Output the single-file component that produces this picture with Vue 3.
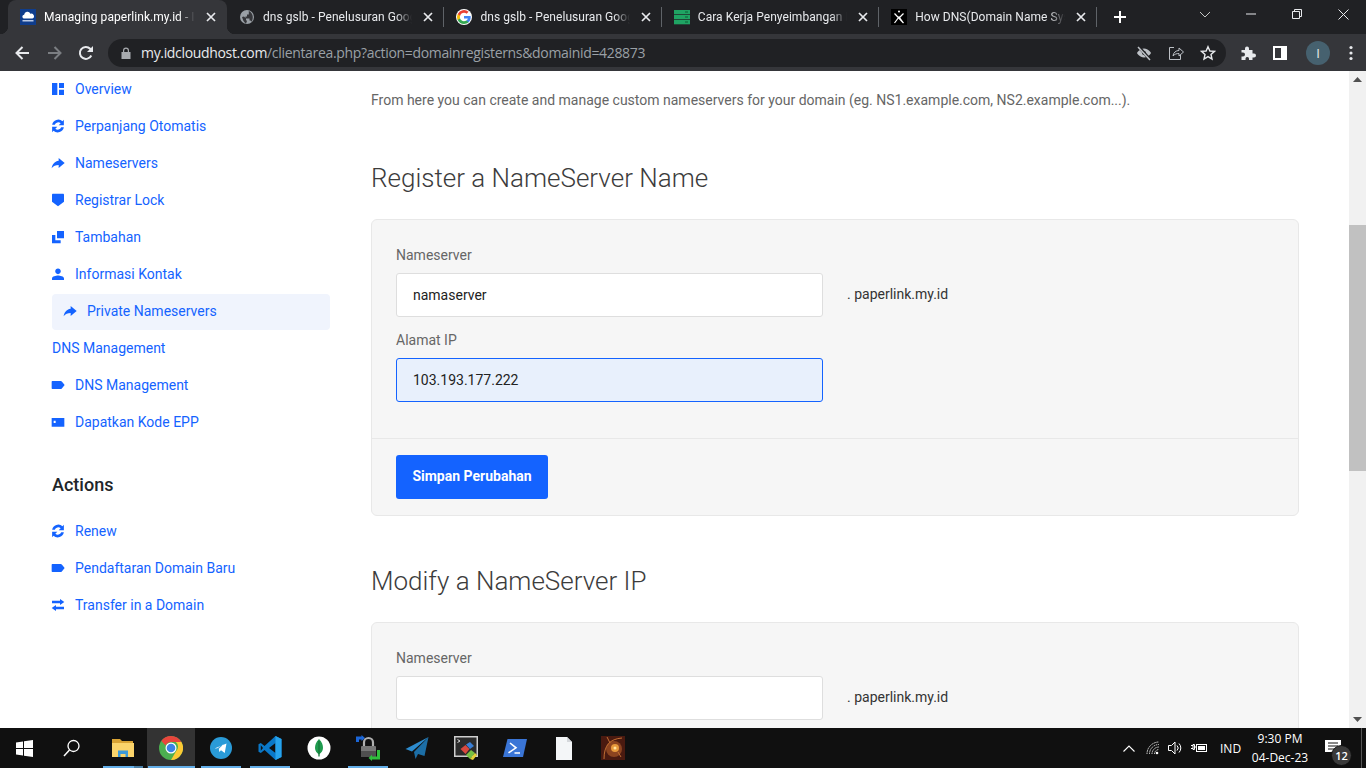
<script setup>
const P = {
  dash: 'M3 3h8v18H3zM13.500 3H21v7.500h-7.500zM13.500 13H21v8h-7.500z',
  sync: 'M20.800 2.800v8H13l3-3A5.600 5.600 0 0 0 7.200 10H3.200A9.400 9.400 0 0 1 18.800 5zM3.200 21.200v-8H11l-3 3A5.600 5.600 0 0 0 16.800 14h4A9.400 9.400 0 0 1 5.200 19z',
  fwd: 'M13 4.500L22 12l-9 7.500v-4.500C8.500 15 5 16.500 2.500 20c.6-5.500 4-10.500 10.500-11.500z',
  shield: 'M4 2.800h16a1 1 0 0 1 1 1v10.700l-9 7-9-7V3.800a1 1 0 0 1 1-1z',
  lib: 'M10.500 3H21v11H10.500zM3 9h5v8h8v4.500H3z',
  person: 'M12 12.200c2.300 0 4.200-1.900 4.200-4.200S14.300 3.800 12 3.800 7.800 5.700 7.800 8s1.900 4.200 4.200 4.200zM12 14.400c-2.900 0-9 1.400-9 4.300v2.200h18v-2.200c0-2.900-6.100-4.300-9-4.300z',
  label: 'M3.500 6H16c.7 0 1.300.3 1.700.8L22 12l-4.300 5.200c-.4.500-1 .8-1.700.8H3.500a1 1 0 0 1-1-1V7a1 1 0 0 1 1-1z',
  card: 'M2.500 6h19v13h-19zM5.500 10v3.500h3V10z',
  swap: 'M15 3l6.500 4.500L15 12V9.500H3v-4h12zM9 12v2.500h12v4H9V21l-6.500-4.500z'
}
const nav = [
  { icon: 'dash', text: 'Overview' },
  { icon: 'sync', text: 'Perpanjang Otomatis' },
  { icon: 'fwd', text: 'Nameservers' },
  { icon: 'shield', text: 'Registrar Lock' },
  { icon: 'lib', text: 'Tambahan' },
  { icon: 'person', text: 'Informasi Kontak' },
  { icon: 'fwd', text: 'Private Nameservers', active: true },
  { text: 'DNS Management' },
  { icon: 'label', text: 'DNS Management' },
  { icon: 'card', text: 'Dapatkan Kode EPP' }
]
const actions = [
  { icon: 'sync', text: 'Renew' },
  { icon: 'label', text: 'Pendaftaran Domain Baru' },
  { icon: 'swap', text: 'Transfer in a Domain' }
]
const tabs = [
  { fav: 'cloud', title: 'Managing paperlink.my.id - IDCloudHost', active: true },
  { fav: 'globe', title: 'dns gslb - Penelusuran Google' },
  { fav: 'google', title: 'dns gslb - Penelusuran Google' },
  { fav: 'server', title: 'Cara Kerja Penyeimbangan Beban' },
  { fav: 'x', title: 'How DNS(Domain Name System) Works' }
]
const apps = ['explorer', 'chrome', 'telegram', 'vscode', 'mongo', 'lock', 'send', 'remote', 'ps', 'file', 'game']
const running = ['explorer', 'chrome', 'telegram', 'vscode', 'lock']
</script>

<template>
  <div class="screen">
    <header class="strip">
      <div v-for="t in tabs" :key="t.fav" class="tab" :class="{ active: t.active }">
        <svg class="fav" viewBox="0 0 16 16">
          <template v-if="t.fav === 'cloud'">
            <rect width="16" height="16" fill="#0f3d8c" />
            <path d="M3.500 9.500a2 2 0 0 1 .6-3.800 3.300 3.300 0 0 1 6.300-.9 2.400 2.400 0 0 1 2 4.700z" fill="#fff" />
            <rect x="2.500" y="11" width="11" height="1.500" fill="#b9c9e6" />
          </template>
          <template v-else-if="t.fav === 'globe'">
            <circle cx="8" cy="8" r="7" fill="#9aa0a6" />
            <path d="M7 14.800C4.500 13 3.800 10.500 3 8l2-.5 2 2v1.500l1 1zM12.500 12.800c-.3-1-1-1.300-2-1.300V9.500H6.500V7.500H8V5.500h1.800V2c2 .6 4 3.200 4 6 0 1.700-.4 3.500-1.300 4.800z" fill="#35363a" />
          </template>
          <template v-else-if="t.fav === 'google'">
            <circle cx="8" cy="8" r="8" fill="#fff" />
            <path d="M14.700 8.200c0-.5 0-.9-.1-1.300H8v2.500h3.800a3.200 3.200 0 0 1-1.400 2.100v1.700h2.300c1.300-1.200 2-3 2-5z" fill="#4285f4" />
            <path d="M8 15c1.900 0 3.400-.6 4.600-1.700l-2.300-1.800c-.6.400-1.400.7-2.400.7-1.800 0-3.400-1.200-3.900-2.900H1.700v1.800A7 7 0 0 0 8 15z" fill="#34a853" />
            <path d="M4.100 9.300a4.200 4.200 0 0 1 0-2.700V4.900H1.700a7 7 0 0 0 0 6.200z" fill="#fbbc05" />
            <path d="M8 3.800c1 0 1.900.4 2.600 1l2-2A7 7 0 0 0 1.700 4.900l2.400 1.800C4.600 5 6.200 3.800 8 3.800z" fill="#ea4335" />
          </template>
          <template v-else-if="t.fav === 'server'">
            <rect x="0" y="1" width="16" height="4.300" fill="#1fa463" />
            <rect x="0" y="6" width="16" height="4.300" fill="#1fa463" />
            <rect x="0" y="11" width="16" height="4.300" fill="#1fa463" />
            <rect x="11" y="2.500" width="3" height="1" fill="#0b5e36" />
            <rect x="11" y="7.500" width="3" height="1" fill="#0b5e36" />
            <rect x="11" y="12.500" width="3" height="1" fill="#0b5e36" />
          </template>
          <template v-else>
            <rect width="16" height="16" fill="#000" />
            <circle cx="8" cy="2.500" r="1" fill="#fff" />
            <path d="M3.500 14 8 8 12.500 14M3.500 4.500 12.500 14M12.500 4.500 8 9" stroke="#fff" stroke-width="1.200" fill="none" />
          </template>
        </svg>
        <span class="tab-title">{{ t.title }}</span>
        <svg class="tab-x" viewBox="0 0 10 10"><path d="M1 1l8 8M9 1l-8 8" stroke="#e8eaed" stroke-width="1.700" /></svg>
      </div>
      <svg class="newtab" viewBox="0 0 12 12"><path d="M6 0v12M0 6h12" stroke="#fff" stroke-width="2" /></svg>
      <div class="strip-fill"></div>
      <div class="winbtn">
        <svg width="12" height="7" viewBox="0 0 12 7"><path d="M1 1l5 5 5-5" stroke="#c4c7c5" fill="none" /></svg>
      </div>
      <div class="winbtn">
        <svg width="10" height="10" viewBox="0 0 10 10"><path d="M0 5h10" stroke="#e8eaed" /></svg>
      </div>
      <div class="winbtn">
        <svg width="10" height="10" viewBox="0 0 10 10"><path d="M.5 2.500h7v7h-7zM2.500 2.500v-2h7v7h-2" stroke="#e8eaed" fill="none" /></svg>
      </div>
      <div class="winbtn">
        <svg width="11" height="11" viewBox="0 0 11 11"><path d="M.5.500l10 10M10.500.500l-10 10" stroke="#e8eaed" /></svg>
      </div>
    </header>

    <div class="toolbar">
      <svg class="tb back" viewBox="0 0 16 16"><path d="M15 8H2.500M8.500 2l-6 6 6 6" stroke="#e8eaed" stroke-width="2" fill="none" /></svg>
      <svg class="tb fwd" viewBox="0 0 16 16"><path d="M1 8h12.500M7.500 2l6 6-6 6" stroke="#7b7e82" stroke-width="2" fill="none" /></svg>
      <svg class="tb reload" viewBox="0 0 16 16"><path d="M13.300 10.500A6 6 0 1 1 12.200 3.700L14 5.500" stroke="#e8eaed" stroke-width="2" fill="none" /><path d="M15 1v6H9z" fill="#e8eaed" /></svg>
      <div class="omni">
        <svg class="padlock" viewBox="0 0 10 12"><path d="M2 5V3.500a3 3 0 0 1 6 0V5h1.500v7H.5V5zM3.200 5h3.600V3.500a1.800 1.800 0 0 0-3.600 0z" fill="#a8abaf" /></svg>
        <span class="url"><b>my.idcloudhost.com</b>/clientarea.php?action=domainregisterns&amp;domainid=428873</span>
        <div class="omni-icons">
          <svg viewBox="0 0 16 16"><path d="M1 8s2.500-4.500 7-4.500S15 8 15 8s-2.500 4.500-7 4.500S1 8 1 8z" fill="#bdc1c6" /><circle cx="8" cy="8" r="2" fill="#202124" /><path d="M2.500 1.500l11.500 13" stroke="#202124" stroke-width="3" /><path d="M2 2l12 13" stroke="#bdc1c6" stroke-width="1.500" /></svg>
          <svg viewBox="0 0 16 16"><path d="M6 2.500H1.500v12h11V10" stroke="#bdc1c6" fill="none" /><path d="M5 11c.3-3.500 3-5.500 6-5.500V3l4.500 4L11 11V8.500C8.500 8.500 6.500 9.200 5 11z" stroke="#bdc1c6" fill="none" /></svg>
          <svg viewBox="0 0 16 16"><path d="M8 1.700l1.900 4.300 4.600.4-3.500 3 1 4.600L8 11.600 4 14l1-4.600-3.500-3 4.600-.4z" stroke="#e8eaed" stroke-width="1.400" fill="none" /></svg>
        </div>
      </div>
      <svg class="tb puzzle" viewBox="0 0 16 16"><path d="M1.500 5H5V3.500a2 2 0 0 1 4 0V5h3.500v3.500H14a2 2 0 0 1 0 4h-1.500V15H9v-1.500a1.800 1.800 0 0 0-3.500 0V15h-4v-3.500H3a2 2 0 0 0 0-4H1.500z" fill="#e8eaed" /></svg>
      <svg class="tb side" viewBox="0 0 14 14"><path d="M0 0h14v14H0zM2 2v10h6V2z" fill="#fff" fill-rule="evenodd" /></svg>
      <div class="avatar">I</div>
      <svg class="tb kebab" viewBox="0 0 4 16"><circle cx="2" cy="2.500" r="1.600" fill="#e8eaed" /><circle cx="2" cy="8" r="1.600" fill="#e8eaed" /><circle cx="2" cy="13.500" r="1.600" fill="#e8eaed" /></svg>
    </div>

    <div class="page">
      <aside class="sidebar">
        <a v-for="(n, i) in nav" :key="i" class="item" :class="{ active: n.active, plain: !n.icon }">
          <svg v-if="n.icon" class="ico" viewBox="0 0 24 24"><path :d="P[n.icon]" fill-rule="evenodd" /></svg>
          <span>{{ n.text }}</span>
        </a>
        <h3 class="side-h">Actions</h3>
        <a v-for="n in actions" :key="n.text" class="item">
          <svg class="ico" viewBox="0 0 24 24"><path :d="P[n.icon]" fill-rule="evenodd" /></svg>
          <span>{{ n.text }}</span>
        </a>
      </aside>

      <main class="main">
        <p class="desc">From here you can create and manage custom nameservers for your domain (eg. NS1.example.com, NS2.example.com...).</p>

        <h2 class="title first">Register a NameServer Name</h2>
        <section class="card">
          <div class="card-body">
            <label class="lbl">Nameserver</label>
            <div class="row">
              <input class="inp" readonly value="namaserver" />
              <span class="suffix">. paperlink.my.id</span>
            </div>
            <label class="lbl">Alamat IP</label>
            <div class="row">
              <input class="inp focus" readonly value="103.193.177.222" />
            </div>
          </div>
          <div class="card-foot">
            <button class="btn">Simpan Perubahan</button>
          </div>
        </section>

        <h2 class="title">Modify a NameServer IP</h2>
        <section class="card">
          <div class="card-body">
            <label class="lbl">Nameserver</label>
            <div class="row">
              <input class="inp" readonly value="" />
              <span class="suffix">. paperlink.my.id</span>
            </div>
          </div>
        </section>
      </main>

      <div class="scrollbar">
        <svg class="arrow" viewBox="0 0 9 5"><path d="M4.500 0L9 5H0z" fill="#505050" /></svg>
        <div class="track"><div class="thumb"></div></div>
        <svg class="arrow" viewBox="0 0 9 5"><path d="M4.500 5L9 0H0z" fill="#505050" /></svg>
      </div>
    </div>

    <footer class="taskbar">
      <div class="tk">
        <svg width="17" height="17" viewBox="0 0 17 17"><path d="M0 2.400 7 1.400V8H0zM8 1.300 17 0V8H8zM0 9h7v6.600L0 14.600zM8 9h9v8l-9-1.300z" fill="#fff" /></svg>
      </div>
      <div class="tk">
        <svg width="18" height="18" viewBox="0 0 18 18"><circle cx="10.500" cy="7" r="5.500" stroke="#fff" stroke-width="1.300" fill="none" /><path d="M6.500 11L1 17" stroke="#fff" stroke-width="1.500" /></svg>
      </div>
      <div v-for="a in apps" :key="a" class="tk app" :class="{ on: a === 'chrome', run: running.includes(a), stacked: a === 'explorer' }">
        <svg width="24" height="26" viewBox="0 0 24 26">
          <template v-if="a === 'explorer'">
            <path d="M1 4h8l2 2h11v16H1z" fill="#d9a334" />
            <path d="M1 8h22v14H1z" fill="#fbd46b" />
            <path d="M7 22v-6.500h10V22h-2.500v-3h-5v3z" fill="#3d9ad8" />
          </template>
          <template v-else-if="a === 'chrome'">
            <circle cx="12" cy="13" r="12" fill="#4caf50" />
            <path d="M12 1a12 12 0 0 1 10.400 6H12a6 6 0 0 0-5.400 3.500L2.300 6A12 12 0 0 1 12 1z" fill="#e8453c" />
            <path d="M22.400 7A12 12 0 0 1 12 25l5.200-9a6 6 0 0 0-.4-9z" fill="#fcc934" />
            <circle cx="12" cy="13" r="5.500" fill="#fff" />
            <circle cx="12" cy="13" r="4.300" fill="#3b82e6" />
          </template>
          <template v-else-if="a === 'telegram'">
            <circle cx="12" cy="13" r="11" fill="#2a9bd8" />
            <path d="M5.500 13.500 17.500 8.500l-1.800 9.500-3.700-2.800-1.700 1.800-.5-3.300 5-4.700-6.500 4.200z" fill="#fff" />
          </template>
          <template v-else-if="a === 'vscode'">
            <path d="M17.500 1 6.500 11 2.800 8 .5 9.200v7.600L2.800 18l3.700-3 11 10 6-3V4zM17.500 8v10L11 13z" fill="#0a78c8" fill-rule="evenodd" />
            <path d="M17.500 1l6 3v18l-6 3zM17.500 8v10l-.1-.1V8.100z" fill="#27a3ec" />
            <path d="M2.800 10.300 5 13l-2.200 2.700z" fill="#101010" />
          </template>
          <template v-else-if="a === 'mongo'">
            <circle cx="12" cy="13" r="11.500" fill="#fff" />
            <path d="M12 4c3 3 4 6 4 9 0 3-2 5-3.400 6l-.3 3h-.6l-.3-3C10 18 8 16 8 13c0-3 1-6 4-9z" fill="#1f9b4f" />
            <path d="M12 6v15" stroke="#0d5a2a" stroke-width=".7" />
          </template>
          <template v-else-if="a === 'lock'">
            <path d="M0 7V1.500h5.500V0L9 3 5.500 6V4.500H3V7z" fill="#1b66d8" />
            <path d="M8 11V7.500a4.500 4.500 0 0 1 9 0V11" stroke="#b0b0b0" stroke-width="2.200" fill="none" />
            <rect x="5" y="11" width="15" height="11" rx="1" fill="#777" />
            <rect x="5" y="16" width="15" height="6" fill="#4f4f4f" />
            <path d="M21 15h3v9.500h-8V26l-3.500-3 3.500-3.200v1.700h5z" fill="#2fbf3c" />
          </template>
          <template v-else-if="a === 'send'">
            <path d="M23.500 2 .5 14l6.500 2.500z" fill="#2d8ccf" />
            <path d="M23.500 2 9 17l1.500 7 2.500-5 6.500 2z" fill="#1c6ea6" />
          </template>
          <template v-else-if="a === 'remote'">
            <rect x="0" y="1" width="24" height="21" fill="#cfcfcf" />
            <rect x="1.500" y="2.500" width="21" height="18" fill="#2b2b2b" />
            <path d="M3.500 4.500 6 6 3.500 7.500" stroke="#ddd" fill="none" />
            <path d="M6.500 14l5-4 4 4-4 5z" fill="#d9483f" />
            <path d="M12 9.500l4-2.500 4 4-4 3z" fill="#3b7fd4" />
            <path d="M12 20l5-5 4 3-5 6z" fill="#77c043" />
            <path d="M16 24l5-6 2 2-4 5z" fill="#e3cf36" />
          </template>
          <template v-else-if="a === 'ps'">
            <path d="M4.500 4H24l-4 18H0z" fill="#3a75d6" />
            <path d="M7 8l6 4.800-7.500 5M11.500 18H17" stroke="#fff" stroke-width="1.600" fill="none" />
          </template>
          <template v-else-if="a === 'file'">
            <path d="M4 2h11l5 5v18H4z" fill="#f4f6f8" />
            <path d="M15 2l5 5h-5z" fill="#d5d8dc" />
          </template>
          <template v-else>
            <rect x="0" y="1" width="24" height="24" fill="#4a1a10" />
            <circle cx="13" cy="14" r="8" fill="#8c4420" />
            <circle cx="14" cy="13" r="4" fill="#e79a3c" />
            <circle cx="14" cy="13" r="1.500" fill="#ffe3a0" />
            <path d="M3 24C3 10 9 4 21 3M6 2l3 6M20 22l-3-5" stroke="#c26f33" fill="none" />
          </template>
        </svg>
      </div>
      <div class="tray">
        <svg class="caret" viewBox="0 0 12 7"><path d="M.5 6.500L6 1l5.500 5.500" stroke="#fff" stroke-width="1.100" fill="none" /></svg>
        <svg class="wifi" viewBox="0 0 14 14"><path d="M1 13a12 12 0 0 1 12-12M3.500 13a9.500 9.500 0 0 1 9.500-9.500M6 13a7 7 0 0 1 7-7M8.500 13A4.500 4.500 0 0 1 13 8.500" stroke="#ddd" stroke-dasharray="1.500 .8" fill="none" /><circle cx="11" cy="12" r="1.300" fill="#fff" /></svg>
        <svg class="vol" viewBox="0 0 16 14"><path d="M.5 4.500h3L7 1v12L3.500 9.500h-3z" stroke="#fff" fill="none" /><path d="M9 4.500a3.500 3.500 0 0 1 0 5M11 2.500a6.500 6.500 0 0 1 0 9" stroke="#fff" fill="none" /></svg>
        <svg class="bat" viewBox="0 0 16 10"><path d="M0 2.500h2M0 5.500h2M2 1.500h1.500v5H2zM3.500 4H5" stroke="#fff" fill="none" /><rect x="5.500" y="1.500" width="10" height="7" stroke="#fff" fill="none" /><rect x="7" y="3" width="7" height="4" fill="#fff" /></svg>
        <span class="ind">IND</span>
        <div class="clock"><span>9:30 PM</span><span>04-Dec-23</span></div>
        <div class="notif">
          <svg width="16" height="12" viewBox="0 0 16 12"><path d="M0 0h16v12H0z" fill="#fff" /><path d="M3 3h10M3 6h10M3 9h7" stroke="#111" /></svg>
          <span class="badge">12</span>
        </div>
        <div class="peek"></div>
      </div>
    </footer>
  </div>
</template>

<style scoped>
.screen {
  width: 1366px;
  height: 768px;
  display: flex;
  flex-direction: column;
  overflow: hidden;
  background: #fff;
  font-family: Roboto, sans-serif;
}

/* browser chrome */
.strip {
  height: 34px;
  flex: none;
  display: flex;
  align-items: stretch;
  padding-left: 8px;
  background: #202124;
}
.tab {
  width: 217.4px;
  flex: none;
  display: flex;
  align-items: center;
  padding: 0 8px 0 12px;
  box-sizing: border-box;
  position: relative;
  color: #e8eaed;
}
.tab.active {
  width: 219px;
  background: #35363a;
  border-radius: 8px 8px 0 0;
  color: #fff;
}
.tab.active::before,
.tab.active::after {
  content: "";
  position: absolute;
  bottom: 0;
  width: 8px;
  height: 8px;
}
.tab.active::before {
  left: -8px;
  background: radial-gradient(circle at 0 0, transparent 8px, #35363a 8.500px);
}
.tab.active::after {
  right: -8px;
  background: radial-gradient(circle at 100% 0, transparent 8px, #35363a 8.500px);
}
.tab:not(.active)::before {
  content: "";
  position: absolute;
  right: 0;
  top: 7px;
  width: 1px;
  height: 20px;
  background: #5f6368;
}
.fav {
  width: 16px;
  height: 16px;
  flex: none;
  margin-right: 8px;
}
.tab-title {
  flex: 1;
  min-width: 0;
  font-size: 12px;
  letter-spacing: 0.05px;
  line-height: 16px;
  white-space: nowrap;
  overflow: hidden;
  -webkit-mask-image: linear-gradient(90deg, #000 calc(100% - 16px), transparent);
  mask-image: linear-gradient(90deg, #000 calc(100% - 16px), transparent);
}
.tab-x {
  width: 10px;
  height: 10px;
  flex: none;
  margin: 0 3px 0 11px;
}
.newtab {
  width: 12px;
  height: 12px;
  align-self: center;
  margin-left: 17px;
}
.strip-fill {
  flex: 1;
}
.winbtn {
  width: 46px;
  height: 28px;
  display: flex;
  align-items: center;
  justify-content: center;
}
.toolbar {
  height: 37px;
  flex: none;
  display: flex;
  align-items: center;
  background: #35363a;
}
.tb {
  flex: none;
  width: 16px;
  height: 16px;
}
.back { margin-left: 14px; }
.fwd { margin-left: 17px; }
.reload { margin-left: 15px; }
.omni {
  width: 1118px;
  height: 28px;
  margin-left: 14px;
  border-radius: 14px;
  background: #202124;
  display: flex;
  align-items: center;
  flex: none;
  box-sizing: border-box;
  padding-left: 13px;
}
.padlock {
  width: 10px;
  height: 12px;
  flex: none;
  margin-right: 10px;
}
.url {
  font-family: "Open Sans", sans-serif;
  font-size: 14px;
  letter-spacing: -0.33px;
  color: #9aa0a6;
  white-space: nowrap;
}
.url b {
  font-weight: 400;
  color: #e8eaed;
}
.omni-icons {
  margin-left: auto;
  display: flex;
  gap: 16px;
  padding-right: 10px;
}
.omni-icons svg {
  width: 16px;
  height: 16px;
}
.puzzle { margin-left: 14px; }
.side { margin-left: 17px; width: 14px; height: 14px; }
.avatar {
  width: 24px;
  height: 24px;
  margin-left: 19px;
  flex: none;
  border-radius: 50%;
  background: #46616f;
  color: #e8eaed;
  font: 13px/24px "Open Sans", sans-serif;
  text-align: center;
}
.kebab { width: 4px; margin-left: 19px; }

/* page */
.page {
  flex: 1;
  min-height: 0;
  display: flex;
  overflow: hidden;
}
.sidebar {
  width: 371px;
  flex: none;
  box-sizing: border-box;
  padding: 1px 41px 0 52px;
  font-size: 14px;
}
.item {
  height: 36px;
  margin-bottom: 1px;
  display: flex;
  align-items: center;
  color: #1463ff;
  line-height: 34px;
  padding-bottom: 2px;
  box-sizing: border-box;
  border-radius: 4px;
}
.item.active {
  padding-left: 10px;
  background: #f0f4fd;
}
.ico {
  width: 16px;
  height: 16px;
  flex: none;
  margin: 0 9px 0 -2px;
  fill: #1463ff;
}
.item.active .ico {
  margin-left: 0;
}
.side-h {
  margin: 32px 0 17px;
  font-size: 18px;
  font-weight: 500;
  line-height: 24px;
  color: #212529;
}
.main {
  width: 928px;
  flex: none;
  margin-right: 50px;
  padding-top: 19px;
}
.desc {
  margin: 0;
  font-size: 14px;
  line-height: 21px;
  color: #666;
}
.title {
  margin: 50px 0 25px;
  font-size: 26px;
  font-weight: 300;
  line-height: 31px;
  color: #3c3c3c;
}
.title.first {
  margin-top: 52px;
}
.card {
  border: 1px solid #e8e8e8;
  border-radius: 6px;
  background: #f6f6f6;
}
.card-body {
  padding: 25px 24px 36px;
}
.lbl {
  display: block;
  margin-bottom: 7px;
  font-size: 14px;
  line-height: 21px;
  color: #666;
}
.row {
  display: flex;
  align-items: center;
  gap: 24px;
  margin-bottom: 13px;
}
.row:last-child {
  margin-bottom: 0;
}
.inp {
  width: 427px;
  height: 44px;
  box-sizing: border-box;
  padding: 0 16px;
  border: 1px solid #dedede;
  border-radius: 3px;
  background: #fff;
  font: 14px Roboto, sans-serif;
  color: #222;
  outline: none;
}
.inp.focus {
  border-color: #1463ff;
  background: #e8f0fc;
}
.suffix {
  font-size: 14px;
  color: #333;
  position: relative;
  top: -1px;
}
.card-foot {
  padding: 16px 24px;
  border-top: 1px solid #e8e8e8;
}
.btn {
  display: block;
  width: 152px;
  height: 44px;
  padding: 0 0 2px;
  border: 0;
  border-radius: 3px;
  background: #1463ff;
  color: #fff;
  font: 700 14px Roboto, sans-serif;
}
.scrollbar {
  width: 17px;
  flex: none;
  display: flex;
  flex-direction: column;
  background: #f1f1f1;
}
.arrow {
  width: 9px;
  height: 5px;
  flex: none;
  margin: 6px 4px;
}
.track {
  flex: 1;
  padding-top: 137px;
}
.thumb {
  height: 246px;
  background: #c1c1c1;
}

/* taskbar */
.taskbar {
  height: 40px;
  flex: none;
  display: flex;
  align-items: stretch;
  background: #101010;
  font-family: "Open Sans", sans-serif;
  color: #fff;
}
.tk {
  width: 48px;
  flex: none;
  display: flex;
  align-items: center;
  justify-content: center;
  position: relative;
}
.tk:nth-child(2) {
  margin-right: 2px;
}
.tk.app {
  width: 49px;
  box-sizing: border-box;
}
.tk.on {
  background: #333;
  border-right: 1px solid #101010;
}
.tk.run::after {
  content: "";
  position: absolute;
  left: 5px;
  right: 4px;
  bottom: 0;
  height: 2px;
  background: #63aee8;
}
.tk.stacked::after {
  background: linear-gradient(90deg, #63aee8 31px, #4a7fa6 31px);
}
.tk.on::after {
  left: 1px;
  right: 0;
}
.tray {
  margin-left: auto;
  display: flex;
  align-items: center;
  font-size: 12px;
}
.caret { width: 12px; height: 7px; margin-right: 11px; }
.wifi { width: 14px; height: 14px; margin-right: 8px; }
.vol { width: 16px; height: 14px; margin-right: 7px; }
.bat { width: 16px; height: 10px; margin-right: 10px; }
.ind { width: 28px; text-align: left; margin-left: 3px; }
.clock {
  width: 58px;
  margin-left: 3px;
  display: flex;
  flex-direction: column;
  align-items: center;
  line-height: 19px;
  white-space: nowrap;
}
.notif {
  width: 32px;
  margin-left: 16px;
  position: relative;
  height: 100%;
  display: flex;
  align-items: center;
  padding-bottom: 4px;
  box-sizing: border-box;
}
.badge {
  position: absolute;
  left: 6px;
  top: 17px;
  width: 19px;
  height: 19px;
  border-radius: 50%;
  background: #3a3a3a;
  border: 1px solid #101010;
  font-size: 11px;
  font-weight: 600;
  line-height: 19px;
  text-align: center;
}
.peek {
  width: 1px;
  height: 100%;
  margin-left: 4px;
  margin-right: 4px;
  background: #555;
}
</style>
